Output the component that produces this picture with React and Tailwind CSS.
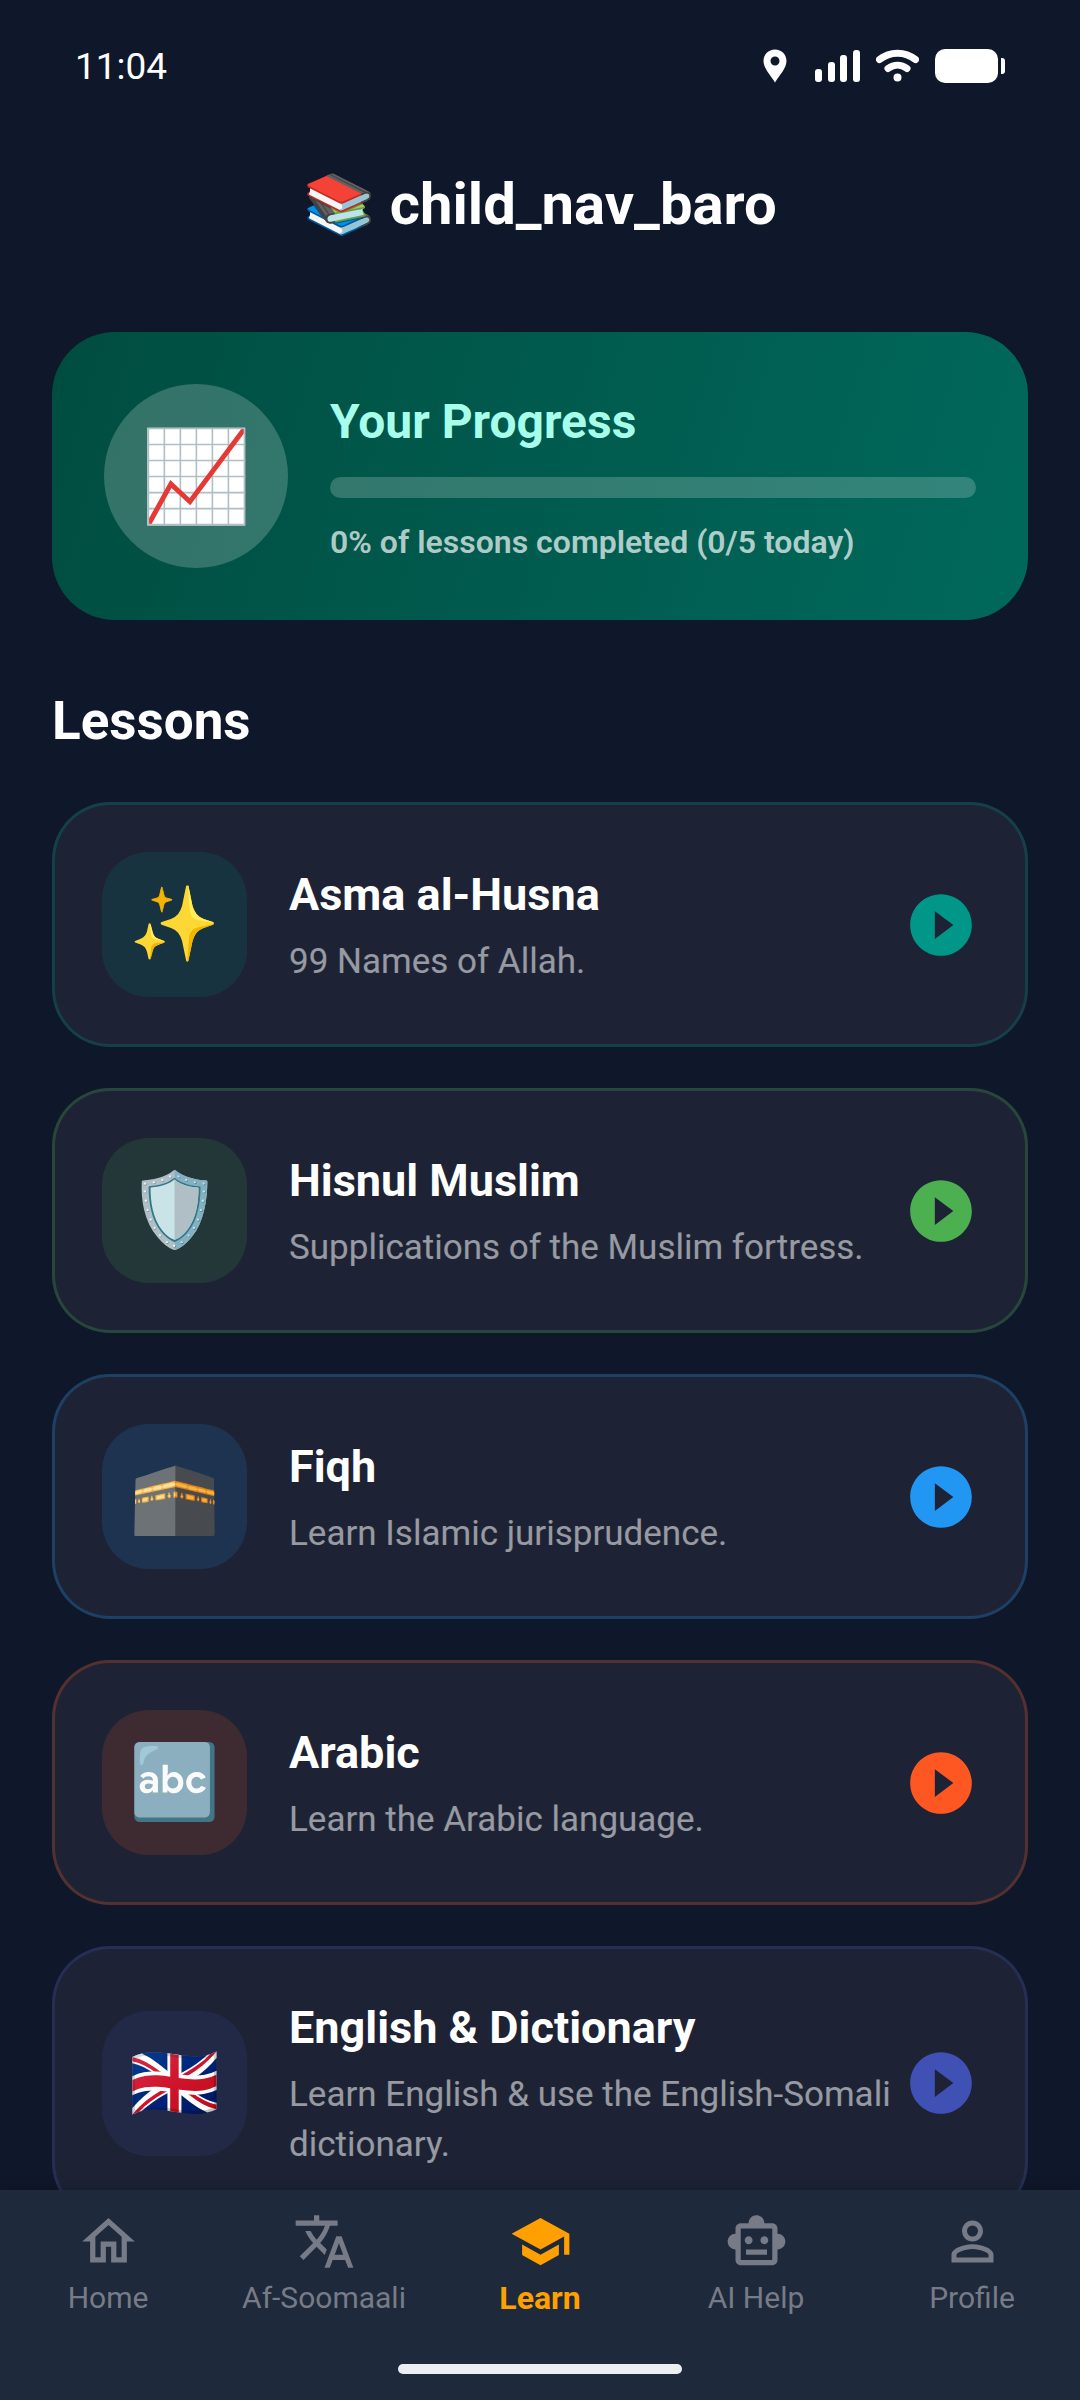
import React, { useState } from "react";
import {
    MdOutlineHome,
    MdTranslate,
    MdSchool,
    MdOutlineSmartToy,
    MdPersonOutline,
    MdPlayCircleFilled
} from "react-icons/md";

const lessons = [
    {
        id: "asma",
        emoji: "✨",
        title: "Asma al-Husna",
        description: "99 Names of Allah.",
        border: "border-[#009688]/25",
        tile: "bg-[#009688]/15",
        play: "text-[#009688]"
    },
    {
        id: "hisnul",
        emoji: "🛡️",
        title: "Hisnul Muslim",
        description: "Supplications of the Muslim fortress.",
        border: "border-[#4caf50]/25",
        tile: "bg-[#4caf50]/15",
        play: "text-[#4caf50]"
    },
    {
        id: "fiqh",
        emoji: "🕋",
        title: "Fiqh",
        description: "Learn Islamic jurisprudence.",
        border: "border-[#2196f3]/25",
        tile: "bg-[#2196f3]/15",
        play: "text-[#2196f3]"
    },
    {
        id: "arabic",
        emoji: "🔤",
        title: "Arabic",
        description: "Learn the Arabic language.",
        border: "border-[#ff5722]/25",
        tile: "bg-[#ff5722]/15",
        play: "text-[#ff5722]"
    },
    {
        id: "english",
        emoji: "🇬🇧",
        title: "English & Dictionary",
        description: "Learn English & use the English-Somali dictionary.",
        border: "border-[#3f51b5]/25",
        tile: "bg-[#3f51b5]/15",
        play: "text-[#3f51b5]"
    }
];

const tabs = [
    { id: "home", label: "Home", Icon: MdOutlineHome },
    { id: "somali", label: "Af-Soomaali", Icon: MdTranslate },
    { id: "learn", label: "Learn", Icon: MdSchool },
    { id: "ai", label: "AI Help", Icon: MdOutlineSmartToy },
    { id: "profile", label: "Profile", Icon: MdPersonOutline }
];

function StatusBar() {
    return (
        <div className="flex h-[132px] shrink-0 items-center justify-between px-[75px]">
            <span className="text-[37px] leading-none">11:04</span>
            <div className="flex items-center gap-4">
                <svg className="mr-3 h-[34px] w-6" viewBox="0 0 24 34" fill="white">
                    <path
                        fillRule="evenodd"
                        d="M12 .5C5.400 .5 .5 5.600 .5 12c0 7 6.500 13.500 11.500 21.500C17 25.500 23.500 19 23.500 12 23.500 5.600 18.600 .5 12 .5zM12 7.500a4.500 4.500 0 1 1 0 9 4.500 4.500 0 0 1 0-9z"
                    />
                </svg>
                <svg className="h-[34px] w-[45px]" viewBox="0 0 45 34" fill="white">
                    <rect x="0" y="20" width="7" height="13" rx="3" />
                    <rect x="13" y="13" width="7" height="20" rx="3" />
                    <rect x="25" y="6" width="7" height="27" rx="3" />
                    <rect x="38" y="1" width="7" height="32" rx="3" />
                </svg>
                <svg className="h-[34px] w-[43px]" viewBox="0 0 43 34" fill="none" stroke="white" strokeLinecap="round">
                    <path d="M3.500 10.500C14 2 29 2 39.500 10.500" strokeWidth="7" />
                    <path d="M12 19.500c6-4.500 13-4.500 19 0" strokeWidth="7" />
                    <circle cx="21.500" cy="28.500" r="4" fill="white" stroke="none" />
                </svg>
                <svg className="h-[34px] w-[70px]" viewBox="0 0 70 34" fill="white">
                    <rect x="0" y="0" width="63" height="34" rx="10" />
                    <path d="M66 9h1a3 3 0 0 1 3 3v10a3 3 0 0 1-3 3h-1z" />
                </svg>
            </div>
        </div>
    );
}

function ProgressCard({ percent, done, total }) {
    return (
        <section className="flex items-center gap-[42px] rounded-[63px] bg-linear-[106deg] from-[#004d40] to-[#00695c] p-[52px]">
            <div className="flex size-[184px] shrink-0 items-center justify-center rounded-full bg-white/20 text-[89px] leading-none">
                📈
            </div>
            <div className="min-w-0 flex-1">
                <h2 id="progress-title" className="text-[48px] leading-[58px] font-bold text-[#a7ffeb]">
                    Your Progress
                </h2>
                <div
                    role="progressbar"
                    aria-labelledby="progress-title"
                    aria-valuenow={percent}
                    aria-valuemin={0}
                    aria-valuemax={100}
                    className="my-[26px] h-[21px] overflow-hidden rounded-full bg-white/20"
                >
                    <div className="h-full bg-[#64ffda]" style={{ width: `${percent}%` }} />
                </div>
                <p className="text-[32px] leading-9 font-semibold text-white/70">
                    {percent}% of lessons completed ({done}/{total} today)
                </p>
            </div>
        </section>
    );
}

function LessonCard({ lesson }) {
    return (
        <button
            type="button"
            className={`flex w-full cursor-pointer items-center rounded-[58px] border-3 bg-[#1d2334] p-[47px] text-left ${lesson.border}`}
        >
            <span
                className={`mr-[42px] flex size-[145px] shrink-0 items-center justify-center rounded-[47px] text-[73px] leading-none ${lesson.tile}`}
            >
                {lesson.emoji}
            </span>
            <span className="min-w-0 flex-1">
                <span className="mb-[10px] block text-[45px] leading-[64px] font-bold text-white">{lesson.title}</span>
                <span className="block text-[35px] leading-[50px] text-white/54">{lesson.description}</span>
            </span>
            <MdPlayCircleFilled className={`size-[74px] shrink-0 ${lesson.play}`} />
        </button>
    );
}

export default function App() {
    const [activeTab, setActiveTab] = useState("learn");

    return (
        <div className="flex h-screen flex-col bg-[#0f172a] font-['Roboto',sans-serif] text-white">
            <StatusBar />

            {/* Title */}
            <header className="shrink-0 pt-[38px] pb-[94px] text-center">
                <h1 className="text-[58px] leading-[68px] font-bold">📚 child_nav_baro</h1>
            </header>

            {/* Content */}
            <main className="min-h-0 flex-1 overflow-y-auto px-[52px] pb-10 [scrollbar-width:none]">
                <ProgressCard percent={0} done={0} total={5} />

                <h2 className="mt-[71px] mb-[51px] text-[53px] leading-[60px] font-bold">Lessons</h2>
                <ul className="flex flex-col gap-[41px]">
                    {lessons.map((lesson) => (
                        <li key={lesson.id}>
                            <LessonCard lesson={lesson} />
                        </li>
                    ))}
                </ul>
            </main>

            {/* Bottom navigation */}
            <nav className="relative shrink-0 bg-[#1e293b] pt-5 pb-[26px] shadow-[0_-2px_12px_rgba(0,0,0,0.2)]">
                <div className="grid grid-cols-5">
                    {tabs.map(({ id, label, Icon }) => (
                        <button
                            key={id}
                            type="button"
                            onClick={() => setActiveTab(id)}
                            className={`flex cursor-pointer flex-col items-center gap-[7px] ${
                                activeTab === id
                                    ? "text-[32px] font-bold text-[#ffa000]"
                                    : "text-[30px] text-[#767b87]"
                            }`}
                        >
                            <Icon className="size-[63px]" />
                            <span className="leading-9">{label}</span>
                        </button>
                    ))}
                </div>
                <div className="mx-auto mt-12 h-[10px] w-[284px] rounded-full bg-[#eceff1]" />
            </nav>
        </div>
    );
}
